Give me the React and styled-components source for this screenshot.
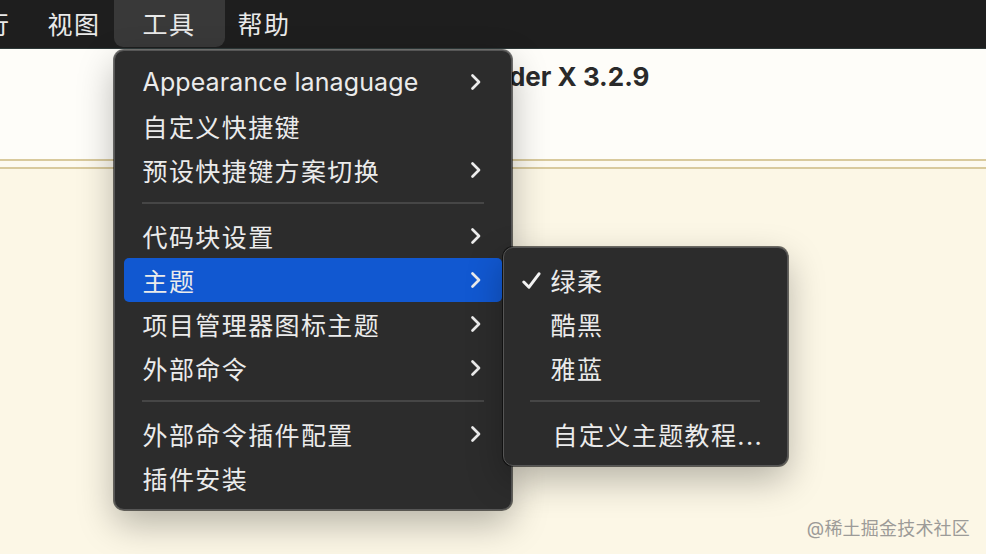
import styled, { createGlobalStyle } from 'styled-components'

const GlobalStyle = createGlobalStyle`
  html, body {
    margin: 0;
    padding: 0;
    background: #fcf7e6;
    font-family: 'Inter', 'Noto Sans CJK SC', sans-serif;
  }
`

const mainItems = [
  { label: 'Appearance lanaguage', sub: true, latin: true },
  { label: '自定义快捷键' },
  { label: '预设快捷键方案切换', sub: true },
  { sep: true },
  { label: '代码块设置', sub: true },
  { label: '主题', sub: true, active: true },
  { label: '项目管理器图标主题', sub: true },
  { label: '外部命令', sub: true },
  { sep: true },
  { label: '外部命令插件配置', sub: true },
  { label: '插件安装' },
]

const themeItems = [
  { label: '绿柔', checked: true },
  { label: '酷黑' },
  { label: '雅蓝' },
  { sep: true },
  { label: '自定义主题教程...', tail: true },
]

function Chevron() {
  return (
    <svg width="12" height="18" viewBox="0 0 12 18">
      <path
        d="M2.5 2.5 L9 9 L2.5 15.5"
        fill="none"
        stroke="#ececec"
        strokeWidth="2.7"
        strokeLinecap="round"
        strokeLinejoin="round"
      />
    </svg>
  )
}

function Check() {
  return (
    <svg width="19" height="17" viewBox="0 0 19 17">
      <path
        d="M1.8 10 L7 15.2 L17 1.8"
        fill="none"
        stroke="#f2f2f2"
        strokeWidth="3"
        strokeLinecap="round"
        strokeLinejoin="round"
      />
    </svg>
  )
}

function ThemeMenu() {
  return (
    <SubMenu>
      {themeItems.map((it, i) =>
        it.sep ? (
          <SubSep key={i} />
        ) : (
          <SubRow key={i}>
            <CheckSlot>{it.checked && <Check />}</CheckSlot>
            <Label $nudge={it.tail}>{it.label}</Label>
          </SubRow>
        )
      )}
    </SubMenu>
  )
}

export default function App() {
  return (
    <>
      <GlobalStyle />
      <Page>
        <MenuBar>
          <BarItem $edge>行</BarItem>
          <BarItem>视图</BarItem>
          <BarItem $active>
            工具
            <Dropdown>
              {mainItems.map((it, i) =>
                it.sep ? (
                  <Separator key={i} />
                ) : (
                  <Row key={i} $active={it.active}>
                    <Label $latin={it.latin}>{it.label}</Label>
                    {it.sub && <Chevron />}
                    {it.active && <ThemeMenu />}
                  </Row>
                )
              )}
            </Dropdown>
          </BarItem>
          <BarItem>帮助</BarItem>
        </MenuBar>
        <Header>
          <Title>HBuilder X 3.2.9</Title>
        </Header>
        <Band />
        <Body />
        <Watermark>@稀土掘金技术社区</Watermark>
      </Page>
    </>
  )
}

const Page = styled.div`
  position: relative;
  width: 986px;
  height: 554px;
  overflow: hidden;
  display: flex;
  flex-direction: column;
  background: #fcf7e6;
`

const MenuBar = styled.nav`
  display: flex;
  align-items: stretch;
  height: 48px;
  flex-shrink: 0;
  margin-left: -37px;
  background: #1e1e1e;
  border-bottom: 1px solid #2d3838;
  position: relative;
  z-index: 2;
`

const BarItem = styled.div`
  position: relative;
  display: flex;
  align-items: center;
  padding: ${(p) => (p.$edge ? '0 16px 2px 21px' : '0 21px 2px')};
  font-size: 25px;
  letter-spacing: 1.5px;
  color: #e9e9e9;

  &::before {
    content: '';
    display: ${(p) => (p.$active ? 'block' : 'none')};
    position: absolute;
    top: 0;
    bottom: 1px;
    left: -8px;
    right: -8px;
    background: #393939;
    border-radius: 0 0 9px 9px;
    z-index: -1;
  }
`

const Dropdown = styled.div`
  position: absolute;
  top: 50px;
  left: -8px;
  width: 398px;
  box-sizing: border-box;
  padding: 9px 0;
  background: #2c2c2c;
  border: 1px solid #565656;
  border-radius: 10px;
  box-shadow: 0 0 0 1px rgba(0, 0, 0, 0.55), 0 14px 36px rgba(0, 0, 0, 0.28);
  letter-spacing: 0;
`

const Row = styled.div`
  position: relative;
  display: flex;
  align-items: center;
  justify-content: space-between;
  height: 44px;
  margin: 0 9px;
  padding: 0 20px 0 19px;
  border-radius: 5px;
  background: ${(p) => (p.$active ? '#1158d1' : 'transparent')};
  color: #ebebeb;
`

const Label = styled.span`
  font-size: 25px;
  letter-spacing: ${(p) => (p.$latin ? '0.1px' : '1.4px')};
  white-space: nowrap;
  margin-left: ${(p) => (p.$nudge ? '2px' : '0')};
`

const Separator = styled.div`
  height: 2px;
  margin: 10px 27px;
  background: #464646;
`

const SubMenu = styled.div`
  position: absolute;
  top: -11px;
  left: calc(100% + 1px);
  width: 285px;
  box-sizing: border-box;
  padding: 10px 0 9px;
  background: #2c2c2c;
  border: 1px solid #565656;
  border-radius: 10px;
  box-shadow: 0 0 0 1px rgba(0, 0, 0, 0.55), 0 14px 36px rgba(0, 0, 0, 0.28);
  z-index: 3;
`

const SubRow = styled.div`
  display: flex;
  align-items: center;
  height: 44px;
  margin: 0 9px;
  padding-left: 9px;
  color: #ebebeb;
`

const CheckSlot = styled.span`
  display: flex;
  align-items: center;
  width: 19px;
  margin-right: 10px;
`

const SubSep = styled.div`
  height: 2px;
  margin: 10px 27px 10px 26px;
  background: #464646;
`

const Header = styled.header`
  height: 112px;
  flex-shrink: 0;
  box-sizing: border-box;
  padding: 12px 0 0 442px;
  background: #fefdf9;
  border-bottom: 2px solid #d9ca9d;
`

const Title = styled.h1`
  margin: 0;
  font-size: 26px;
  line-height: 32px;
  font-weight: 700;
  color: #2a2a2a;
`

const Band = styled.div`
  height: 6px;
  flex-shrink: 0;
  background: #fdfaf0;
  border-bottom: 2px solid #d9ca9d;
`

const Body = styled.main`
  flex: 1;
  background: #fcf7e6;
`

const Watermark = styled.div`
  position: absolute;
  right: 16px;
  bottom: 14px;
  font-size: 18px;
  letter-spacing: 0.2px;
  color: #9c9b98;
`
